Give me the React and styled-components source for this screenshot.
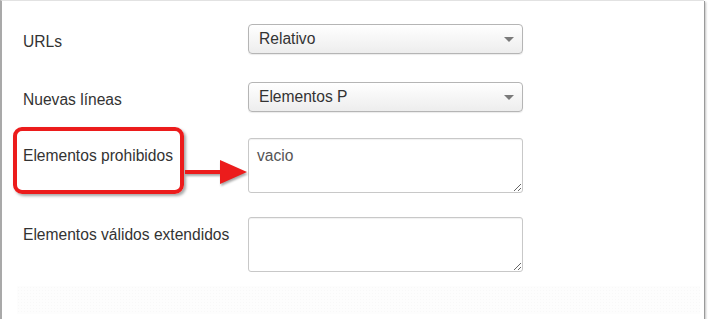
import React from "react";
import styled, { createGlobalStyle } from "styled-components";

const Global = createGlobalStyle`
  html, body { margin: 0; padding: 0; background: #ffffff; }
  body { font-family: "Liberation Sans", Arial, sans-serif; }
`;

const Panel = styled.div`
  position: relative;
  box-sizing: border-box;
  width: 704px;
  height: 319px;
  background: #fff;
  border-left: 2px solid #a9a9a9;
  border-top: 1px solid #e2e2e2;
  box-shadow: 1px 1px 0 #9a9a9a, 2px 2px 2px rgba(0, 0, 0, 0.25);
  padding: 23px 4px 5px 15px;
  display: flex;
  flex-direction: column;
`;

const Form = styled.div`
  display: flex;
  flex-direction: column;
  padding-left: 6px;
`;

const Row = styled.div`
  display: grid;
  grid-template-columns: 225px 275px;
  align-items: start;
  margin-bottom: ${(p) => p.$gap || 0}px;
`;

const Label = styled.div`
  font-size: 15.6px;
  line-height: 20px;
  color: #333;
  padding-top: 8px;
`;

const SelectBox = styled.div`
  box-sizing: border-box;
  height: 30px;
  border: 1px solid #b5b5b5;
  border-radius: 4px;
  background: linear-gradient(#ffffff, #ededed);
  box-shadow: 0 1px 1px rgba(0, 0, 0, 0.08);
  display: flex;
  align-items: center;
  justify-content: space-between;
  padding: 0 8px 0 10px;
  font-size: 15.6px;
  line-height: 28px;
  color: #333;
`;

const Caret = styled.span`
  width: 0;
  height: 0;
  border-left: 5px solid transparent;
  border-right: 5px solid transparent;
  border-top: 5px solid #7a7a7a;
`;

const Area = styled.textarea`
  box-sizing: border-box;
  width: 275px;
  height: 55px;
  margin: 0;
  border: 1px solid #c8c8c8;
  border-radius: 3px;
  box-shadow: inset 0 1px 1px rgba(0, 0, 0, 0.06);
  padding: 7px 8px;
  font-family: "Liberation Sans", Arial, sans-serif;
  font-size: 15.6px;
  line-height: 20px;
  color: #555;
  background: #fff;
  outline: none;
  display: block;
`;

const Footer = styled.div`
  margin-top: 14px;
  height: 28px;
  background-color: #fdfdfd;
  background-image: radial-gradient(#f8f8f8 0.6px, transparent 0.8px);
  background-size: 3px 3px;
`;

const Callout = styled.div`
  position: absolute;
  left: 11px;
  top: 126px;
  width: 171px;
  height: 67px;
  box-sizing: border-box;
  border: 4px solid #ec1c1c;
  border-radius: 9px;
  box-shadow: 2px 2px 3px rgba(0, 0, 0, 0.35);
  pointer-events: none;
`;

const ArrowSvg = styled.svg`
  position: absolute;
  left: 181px;
  top: 157px;
  filter: drop-shadow(1px 2px 1px rgba(0, 0, 0, 0.35));
  overflow: visible;
`;

const Select = ({ value }) => (
  <SelectBox>
    <span>{value}</span>
    <Caret />
  </SelectBox>
);

export default function App() {
  return (
    <>
      <Global />
      <Panel>
        <Form>
          <Row $gap={28}>
            <Label>URLs</Label>
            <Select value="Relativo" />
          </Row>
          <Row $gap={26}>
            <Label>Nuevas líneas</Label>
            <Select value="Elementos P" />
          </Row>
          <Row $gap={24}>
            <Label>Elementos prohibidos</Label>
            <Area defaultValue="vacio" readOnly />
          </Row>
          <Row>
            <Label>Elementos válidos extendidos</Label>
            <Area defaultValue="" readOnly />
          </Row>
        </Form>
        <Footer />
        <Callout />
        <ArrowSvg width="68" height="28" viewBox="0 0 68 28">
          <rect x="2" y="12" width="38" height="4" fill="#ec1c1c" />
          <polygon points="37,2 64,14 37,26" fill="#ec1c1c" />
        </ArrowSvg>
      </Panel>
    </>
  );
}
